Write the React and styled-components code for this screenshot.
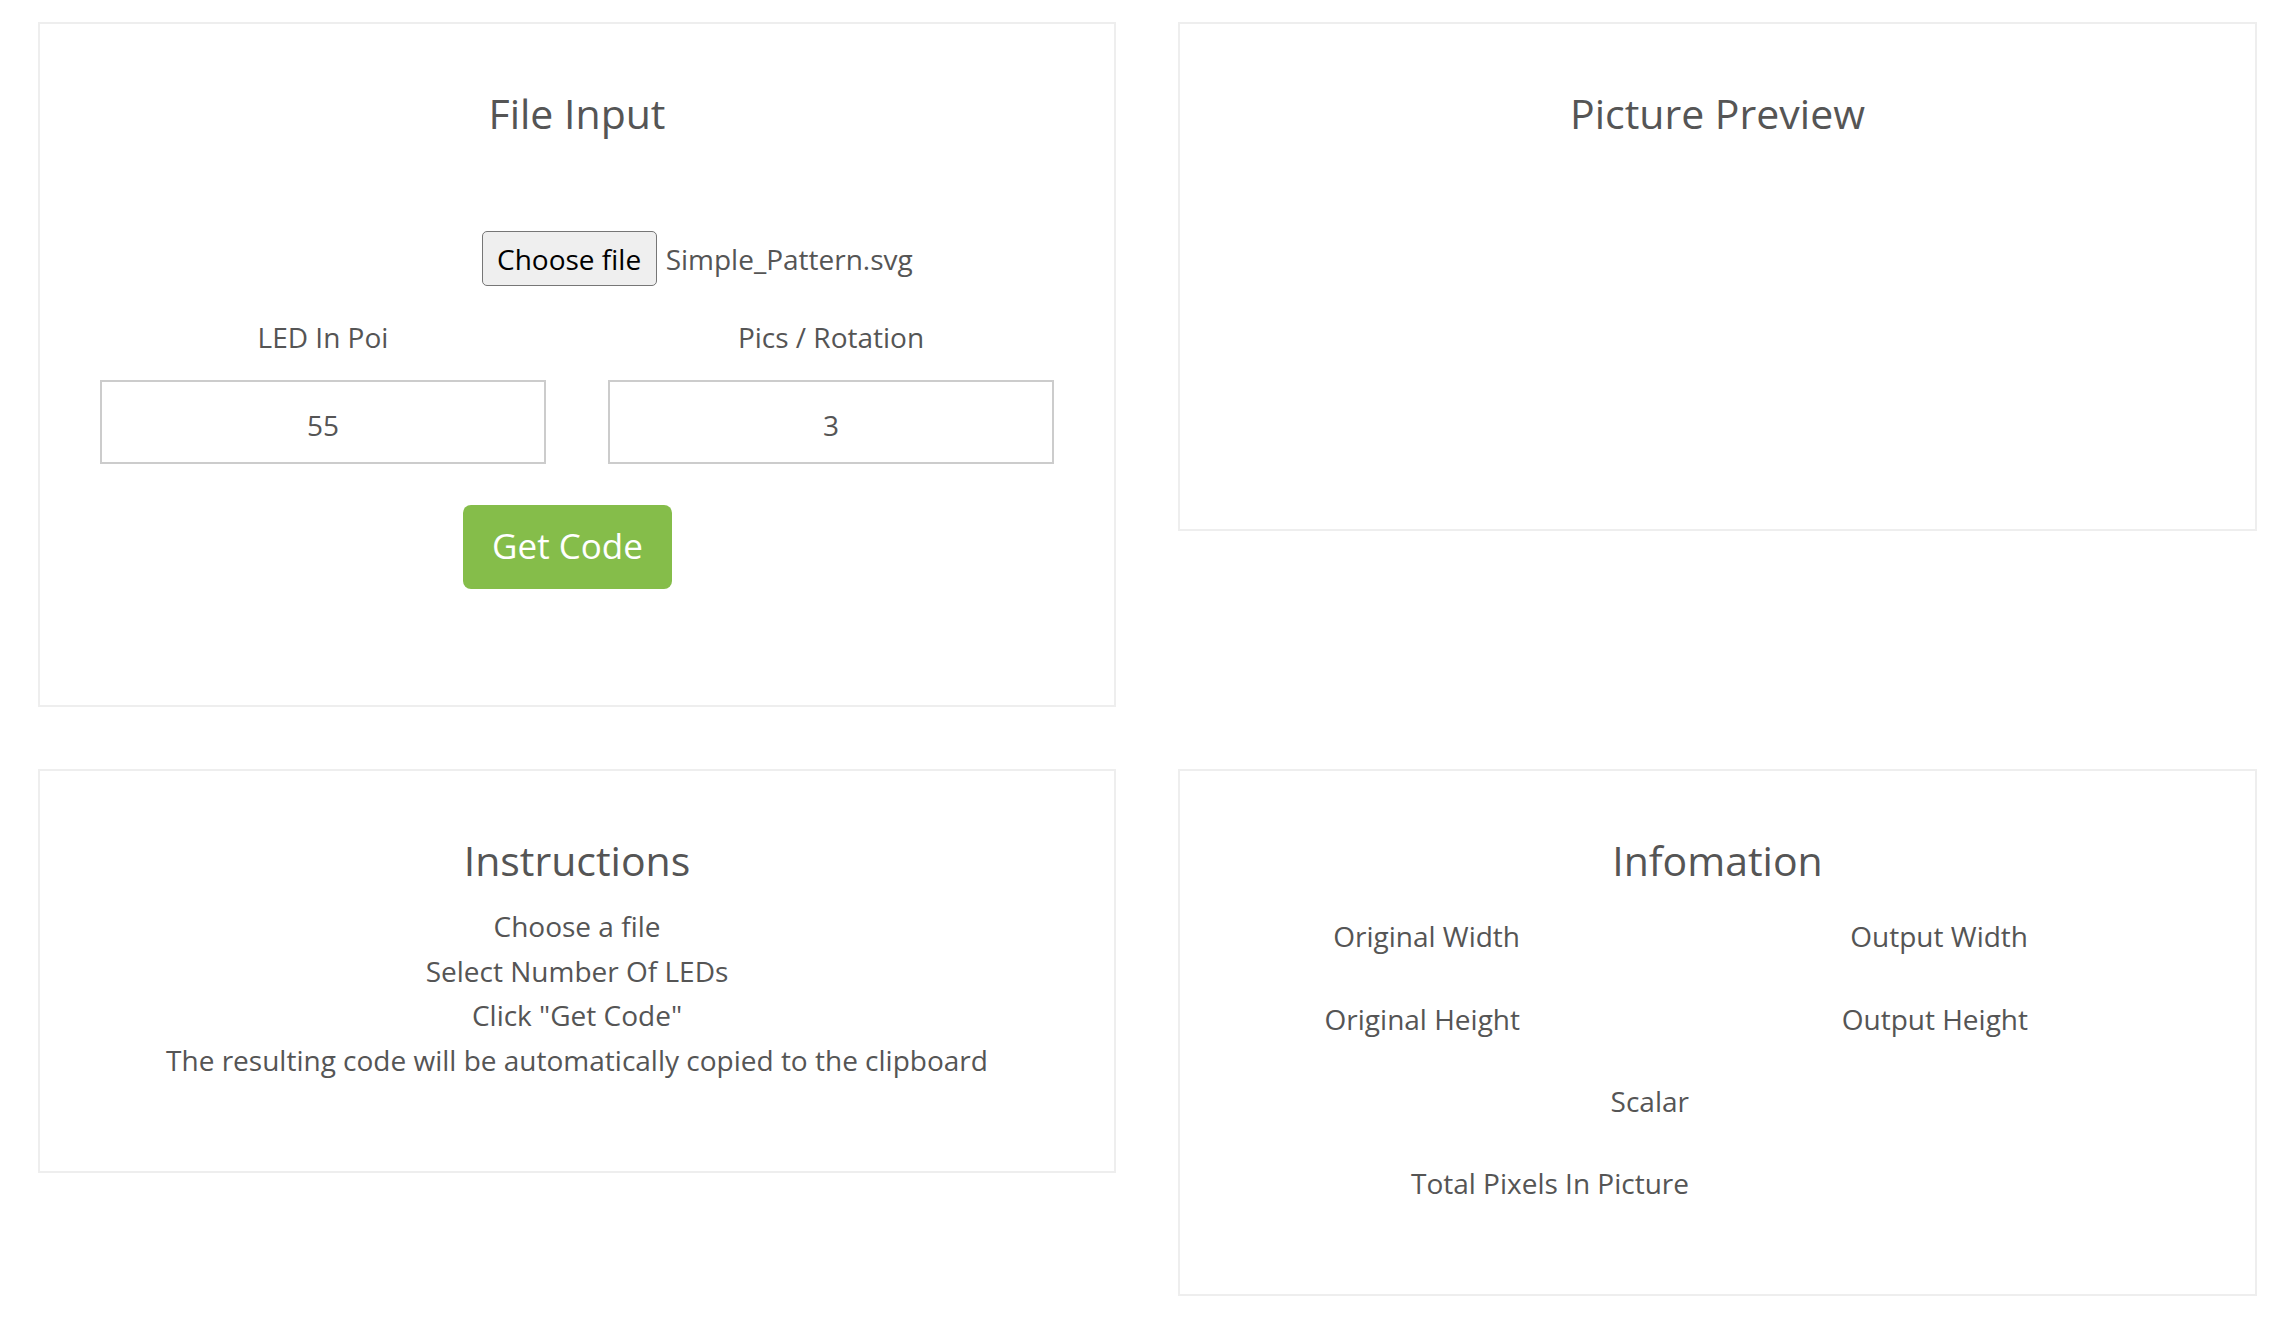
import React from 'react'
import styled, { createGlobalStyle } from 'styled-components'

const GlobalStyle = createGlobalStyle`
  html, body {
    margin: 0;
    padding: 0;
    background: #fff;
  }

  body {
    font-family: "Open Sans", "Liberation Sans", sans-serif;
    color: #555;
  }
`

const Page = styled.div`
  display: grid;
  grid-template-columns: 1078px 1079px;
  column-gap: 62px;
  row-gap: 62px;
  align-items: start;
  padding: 22px 19px 28px 38px;
`

const Panel = styled.section`
  border: 2px solid #eee;
  padding: 65px 0 ${props => props.$padBottom}px;
  text-align: center;
`

const Title = styled.h2`
  margin: 0;
  font-size: 41px;
  font-weight: 400;
  line-height: 49px;
  color: #555;
`

const FileRow = styled.div`
  display: flex;
  justify-content: center;
  margin-top: 93px;
`

const FilePicker = styled.div`
  display: flex;
  align-items: center;
  width: 191px;
  white-space: nowrap;
`

const ChooseButton = styled.button`
  flex: none;
  height: 55px;
  box-sizing: border-box;
  padding: 0 14.5px;
  border: 1.5px solid #767676;
  border-radius: 5px;
  background: #efefef;
  color: #000;
  font-family: "Open Sans", sans-serif;
  font-size: 28px;
  line-height: 38px;
`

const FileName = styled.span`
  margin-left: 9px;
  font-size: 28px;
  line-height: 38px;
  color: #555;
`

const FieldGrid = styled.div`
  display: grid;
  grid-template-columns: 1fr 1fr;
  column-gap: 62px;
  padding: 0 60px;
  margin-top: 32px;
`

const Field = styled.label`
  display: flex;
  flex-direction: column;
  gap: 24px;
`

const FieldLabel = styled.span`
  font-size: 28px;
  line-height: 38px;
`

const NumberInput = styled.input`
  width: 100%;
  height: 84px;
  box-sizing: border-box;
  padding: 5px 0 0;
  border: 2px solid #ccc;
  border-radius: 0;
  outline: none;
  background: #fff;
  text-align: center;
  font-family: "Open Sans", sans-serif;
  font-size: 28px;
  color: #555;
`

const ButtonRow = styled.div`
  display: flex;
  justify-content: center;
  margin-top: 41px;
`

const GetCode = styled.button`
  height: 84px;
  padding: 0 29px 3px;
  margin-right: 19px;
  border: none;
  border-radius: 8px;
  background: #85bd4a;
  color: #fff;
  font-family: "Open Sans", sans-serif;
  font-size: 35px;
  line-height: 48px;
`

const PreviewArea = styled.div`
  height: 391px;
`

const Steps = styled.div`
  margin-top: 19px;
`

const Step = styled.p`
  margin: 0;
  font-size: 28px;
  line-height: 44.7px;
`

const Info = styled.div`
  margin-top: 10px;
`

const InfoGrid = styled.div`
  display: grid;
  grid-template-columns: ${props => props.$cols};
  grid-auto-rows: 82.4px;
  align-items: center;
`

const InfoLabel = styled.span`
  text-align: right;
  font-size: 28px;
  line-height: 38px;
`

const InfoValue = styled.span`
  text-align: left;
  padding-left: 20px;
  font-size: 28px;
  line-height: 38px;
`

const STEPS = [
  'Choose a file',
  'Select Number Of LEDs',
  'Click "Get Code"',
  'The resulting code will be automatically copied to the clipboard'
]

export default function App () {
  return (
    <>
      <GlobalStyle />
      <Page>
        <Panel $padBottom={116}>
          <Title>File Input</Title>
          <FileRow>
            <FilePicker>
              <ChooseButton type='button'>Choose file</ChooseButton>
              <FileName>Simple_Pattern.svg</FileName>
            </FilePicker>
          </FileRow>
          <FieldGrid>
            <Field>
              <FieldLabel>LED In Poi</FieldLabel>
              <NumberInput type='text' inputMode='numeric' defaultValue='55' />
            </Field>
            <Field>
              <FieldLabel>Pics / Rotation</FieldLabel>
              <NumberInput type='text' inputMode='numeric' defaultValue='3' />
            </Field>
          </FieldGrid>
          <ButtonRow>
            <GetCode type='button'>Get Code</GetCode>
          </ButtonRow>
        </Panel>

        <Panel $padBottom={0}>
          <Title>Picture Preview</Title>
          <PreviewArea />
        </Panel>

        <Panel $padBottom={88}>
          <Title>Instructions</Title>
          <Steps>
            {STEPS.map(step => <Step key={step}>{step}</Step>)}
          </Steps>
        </Panel>

        <Panel $padBottom={69}>
          <Title>Infomation</Title>
          <Info>
            <InfoGrid $cols='340px 230px 278px 1fr'>
              <InfoLabel>Original Width</InfoLabel>
              <InfoValue />
              <InfoLabel>Output Width</InfoLabel>
              <InfoValue />
              <InfoLabel>Original Height</InfoLabel>
              <InfoValue />
              <InfoLabel>Output Height</InfoLabel>
              <InfoValue />
            </InfoGrid>
            <InfoGrid $cols='509px 1fr'>
              <InfoLabel>Scalar</InfoLabel>
              <InfoValue />
              <InfoLabel>Total Pixels In Picture</InfoLabel>
              <InfoValue />
            </InfoGrid>
          </Info>
        </Panel>
      </Page>
    </>
  )
}
